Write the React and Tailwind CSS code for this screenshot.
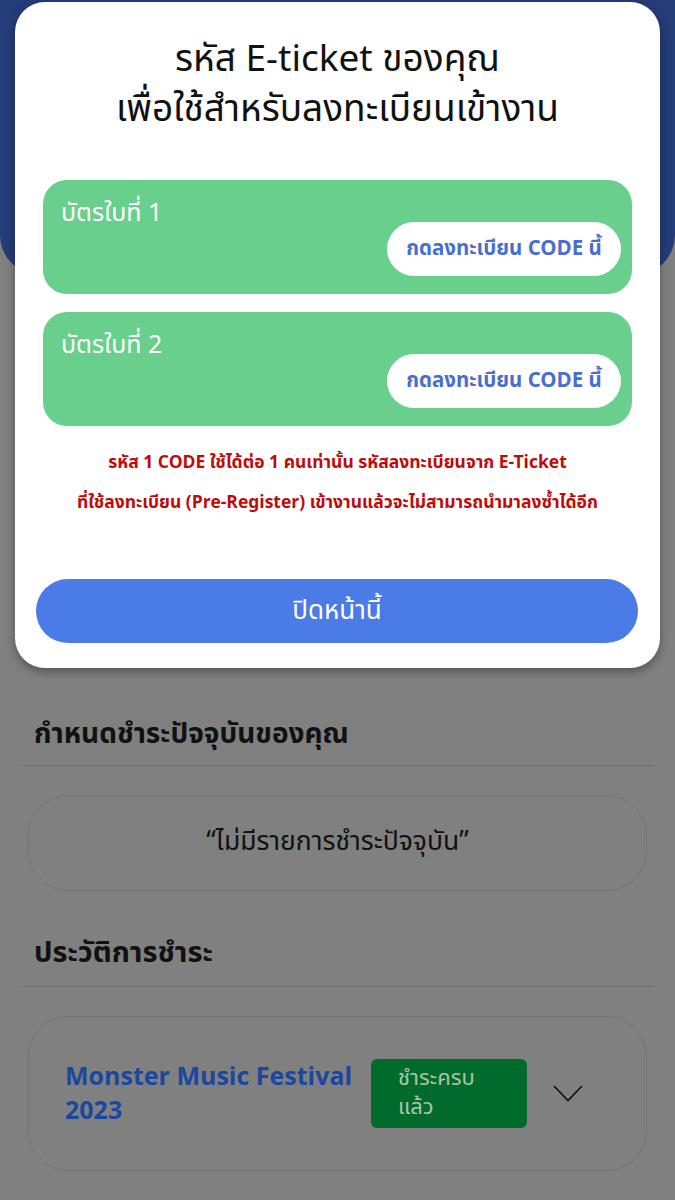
const font = { fontFamily: '"Noto Sans Thai", "Noto Sans", "Liberation Sans", sans-serif' };

function TicketCard({ label }) {
  return (
    <div className="bg-[#68d08c] rounded-[24px] h-[114px] pl-[18px] pr-[11px] pt-[18px] flex flex-col">
      <p className="text-white text-[25px] leading-[30px]">{label}</p>
      <div className="flex justify-end -mt-[6px]">
        <button className="bg-white rounded-full w-[234px] h-[54px] text-[#4a6dd0] text-[20.5px] font-bold">
          กดลงทะเบียน CODE นี้
        </button>
      </div>
    </div>
  );
}

export default function App() {
  return (
    <div className="relative min-h-[1200px] bg-[#808080] overflow-hidden" style={font}>
      {/* dimmed page behind the modal */}
      <div className="h-[275px] bg-[#243c78] rounded-b-[40px]" />

      <div className="px-[20px] pt-[442px]">
        <h2 className="px-[14px] text-[28px] font-bold text-[#111] leading-[36px]">กำหนดชำระปัจจุบันของคุณ</h2>
        <div className="mt-[12px] border-t border-[#6e6e6e]" />
        <div className="mt-[29px] mx-[8px] h-[96px] rounded-[40px] border border-[#747474] flex items-center justify-center">
          <p className="text-[26.5px] text-[#111]">“ไม่มีรายการชำระปัจจุบัน”</p>
        </div>

        <h2 className="mt-[44px] px-[14px] text-[29px] font-bold text-[#111] leading-[36px]">ประวัติการชำระ</h2>
        <div className="mt-[15px] border-t border-[#6e6e6e]" />
        <div className="mt-[29px] mx-[8px] h-[155px] rounded-[40px] border border-[#747474] flex items-center pl-[36px]">
          <div className="w-[306px] text-[25px] font-bold text-[#1a47a0] leading-[34px]">
            <p>Monster Music Festival</p>
            <p>2023</p>
          </div>
          <div className="w-[156px] h-[69px] rounded-[6px] bg-[#006b2b] pl-[27px] pt-[5px] text-[#a9c4a9] text-[22px] leading-[29px]">
            <p>ชำระครบ</p>
            <p>แล้ว</p>
          </div>
          <svg className="ml-[26px]" width="30" height="17" viewBox="0 0 30 17" fill="none">
            <polyline points="1,1 15,15.5 29,1" stroke="#111" strokeWidth="1.6" />
          </svg>
        </div>
      </div>

      {/* modal */}
      <div className="absolute top-[2px] left-[15px] w-[645px] h-[666px] bg-white rounded-[30px] shadow-[0_4px_10px_rgba(0,0,0,0.35)] px-[28px] pt-[33px]">
        <div className="text-center text-[37px] leading-[50px] text-[#111]">
          <h1>รหัส E-ticket ของคุณ</h1>
          <p>เพื่อใช้สำหรับลงทะเบียนเข้างาน</p>
        </div>
        <div className="mt-[45px] flex flex-col gap-[18px]">
          <TicketCard label="บัตรใบที่ 1" />
          <TicketCard label="บัตรใบที่ 2" />
        </div>
        <div className="mt-[17px] text-center text-[#c00a0a] text-[17.5px] font-bold leading-[40px]">
          <p>รหัส 1 CODE ใช้ได้ต่อ 1 คนเท่านั้น รหัสลงทะเบียนจาก E-Ticket</p>
          <p>ที่ใช้ลงทะเบียน (Pre-Register) เข้างานแล้วจะไม่สามารถนำมาลงซ้ำได้อีก</p>
        </div>
        <button className="mt-[56px] -mx-[7px] w-[602px] h-[64px] rounded-full bg-[#4a7be6] text-white text-[26px]">
          ปิดหน้านี้
        </button>
      </div>
    </div>
  );
}
